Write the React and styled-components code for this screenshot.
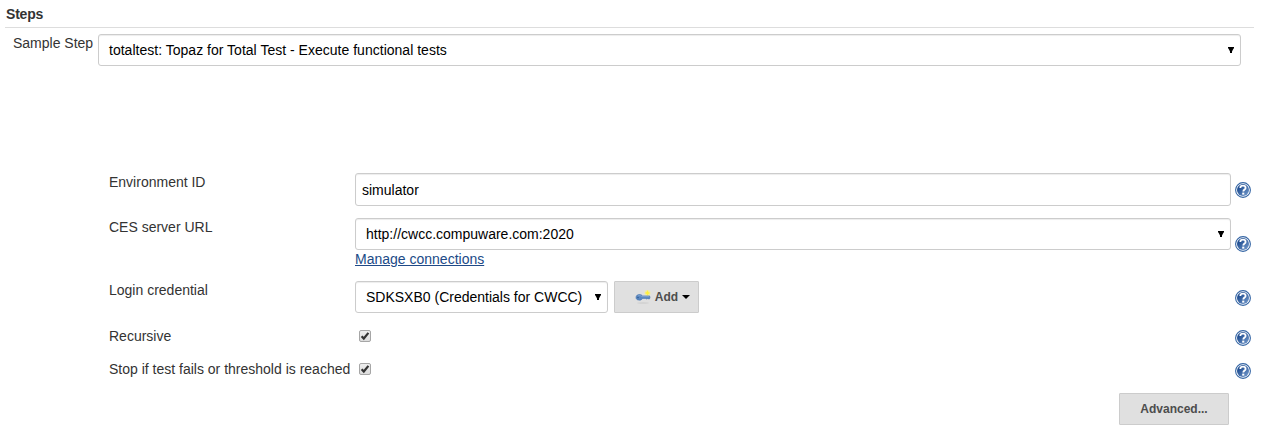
import React from "react";
import styled, { createGlobalStyle } from "styled-components";

const GlobalStyle = createGlobalStyle`
  *, *::before, *::after { box-sizing: border-box; }
  body {
    margin: 0;
    background: #fff;
    color: #333;
    font: 14px/20px "Liberation Sans", Arial, sans-serif;
  }
`;

const Page = styled.main`
  padding: 4px 7px 0 5px;
`;

const SectionTitle = styled.h1`
  margin: 0;
  height: 24px;
  padding-left: 1px;
  border-bottom: 1px solid #ddd;
  font-size: 14px;
  line-height: 20px;
  font-weight: bold;
  letter-spacing: -0.2px;
`;

const StepRow = styled.div`
  display: flex;
  padding: 6px 13px 0 8px;
`;

const StepLabel = styled.label`
  width: 85px;
  margin-top: -1px;
  white-space: nowrap;
`;

const Form = styled.div`
  padding: 107px 0 0 104px;
`;

const Row = styled.div`
  display: grid;
  grid-template-columns: 246px 876px 1fr;
  height: ${(p) => p.$height}px;
`;

const Label = styled.label`
  margin-top: ${(p) => p.$top ?? -1}px;
  white-space: nowrap;
`;

const Field = styled.div`
  min-width: 0;
`;

const Box = styled.div`
  display: flex;
  align-items: center;
  justify-content: space-between;
  flex: ${(p) => (p.$width ? "none" : 1)};
  width: ${(p) => (p.$width ? `${p.$width}px` : "auto")};
  height: ${(p) => p.$height ?? 32}px;
  padding: 0 6px 0 ${(p) => p.$left ?? 10}px;
  border: 1px solid #ccc;
  border-radius: 3px;
  box-shadow: inset 0 1px 1px rgba(0, 0, 0, 0.075);
  background: #fff;
  color: #000;
  white-space: nowrap;
  letter-spacing: ${(p) => p.$spacing ?? 0}px;
`;

const Arrow = styled.svg`
  display: block;
  width: 6px;
  height: 6px;
  flex: none;
`;

const Link = styled.a`
  display: block;
  width: max-content;
  margin-top: -1px;
  color: #204a87;
  text-decoration: underline;
`;

const Controls = styled.div`
  display: flex;
  gap: 6px;
`;

const Button = styled.button`
  display: flex;
  align-items: center;
  justify-content: center;
  width: ${(p) => p.$width}px;
  height: 32px;
  padding: ${(p) => p.$padding ?? "0"};
  border: 1px solid #ccc;
  border-radius: 1px;
  background: #e0e0e0;
  color: #4d4d4d;
  font: bold 12px/20px "Liberation Sans", Arial, sans-serif;
`;

const KeySvg = styled.svg`
  display: block;
  width: 16px;
  height: 16px;
  margin-right: 4px;
`;

const Caret = styled.span`
  margin-left: 4px;
  border: 4px solid transparent;
  border-top-color: #000;
  border-bottom: 0;
`;

const HelpSvg = styled.svg`
  display: block;
  width: 16px;
  height: 16px;
  margin: ${(p) => p.$top}px 0 0 4px;
`;

const CheckSvg = styled.svg`
  display: block;
  width: 12px;
  height: 12px;
  margin: 4px 0 0 4px;
`;

const Footer = styled.div`
  display: flex;
  justify-content: flex-end;
  padding-right: 25px;
`;

const DownArrow = () => (
  <Arrow viewBox="0 0 6 6">
    <path d="M0 0H6V1L5 2.5L4 4.5V6H2V4.5L1 2.5L0 1Z" fill="#000" />
  </Arrow>
);

const Select = ({ children, ...rest }) => (
  <Box {...rest}>
    <span>{children}</span>
    <DownArrow />
  </Box>
);

const Help = ({ top }) => (
  <HelpSvg $top={top} viewBox="0 0 16 16">
    <defs>
      <linearGradient id="help" x1="0" y1="0" x2="1" y2="1">
        <stop offset="0.25" stopColor="#214f93" />
        <stop offset="1" stopColor="#7ba0d0" />
      </linearGradient>
    </defs>
    <circle cx="8" cy="8" r="7.4" fill="#fff" stroke="#3465a4" strokeWidth="1.1" />
    <circle cx="8" cy="8" r="6" fill="url(#help)" />
    <path
      d="M5.3 6C5.3 4.4 6.4 3.7 8 3.7S10.6 4.5 10.6 5.9C10.6 7.5 8.3 7.6 8.3 9.6"
      fill="none"
      stroke="#fff"
      strokeWidth="1.8"
    />
    <rect x="7.2" y="10.6" width="2.1" height="2" fill="#fff" />
  </HelpSvg>
);

const Check = () => (
  <CheckSvg viewBox="0 0 12 12">
    <defs>
      <linearGradient id="check" x1="0" y1="0" x2="0" y2="1">
        <stop offset="0" stopColor="#eee" />
        <stop offset="1" stopColor="#dcdcdc" />
      </linearGradient>
    </defs>
    <rect x="0.5" y="0.5" width="11" height="11" rx="1.5" fill="url(#check)" stroke="#a6a6a6" />
    <path d="M2.6 6.2L4.8 8.5L9.4 2.9" fill="none" stroke="#333" strokeWidth="2.2" />
  </CheckSvg>
);

const Key = () => (
  <KeySvg viewBox="0 0 16 16">
    <ellipse cx="8" cy="14" rx="6" ry="0.8" fill="#cfcfcf" />
    <circle cx="12.5" cy="4" r="3" fill="#f0eaa8" />
    <path d="M12.5 1.3L13.4 3.1L15.2 4L13.4 4.9L12.5 6.7L11.6 4.9L9.8 4L11.6 3.1Z" fill="#fff23f" />
    <path
      d="M1 8.4C1 6.4 2.8 5.3 4.8 5.5C6.2 5.6 7 6.2 7.4 6.9H14.6L15 8.6L14.4 10H13.4L12.8 9.4L12 10.2L11 9.4H7.6C6.8 10.8 5.4 11.3 3.8 11.1C2 10.9 1 9.9 1 8.4Z"
      fill="#5b88c0"
      stroke="#4473b0"
      strokeWidth="0.6"
    />
    <path d="M3 6.9C4.2 6.3 5.6 6.5 6.8 7.6H14" fill="none" stroke="#8aacd5" strokeWidth="0.7" />
    <circle cx="3" cy="8.6" r="0.8" fill="#2f5b94" />
  </KeySvg>
);

export default function App() {
  return (
    <>
      <GlobalStyle />
      <Page>
        <SectionTitle>Steps</SectionTitle>
        <StepRow>
          <StepLabel>Sample Step</StepLabel>
          <Select $spacing={0.015}>totaltest: Topaz for Total Test - Execute functional tests</Select>
        </StepRow>
        <Form>
          <Row $height={45}>
            <Label>Environment ID</Label>
            <Field>
              <Box $height={33} $left={6}>simulator</Box>
            </Field>
            <Help top={9} />
          </Row>
          <Row $height={63}>
            <Label>CES server URL</Label>
            <Field>
              <Select>http://cwcc.compuware.com:2020</Select>
              <Link>Manage connections</Link>
            </Field>
            <Help top={18} />
          </Row>
          <Row $height={45}>
            <Label>Login credential</Label>
            <Controls>
              <Select $width={253}>SDKSXB0 (Credentials for CWCC)</Select>
              <Button $width={85} $padding="0 0 0 12px">
                <Key />
                Add
                <Caret />
              </Button>
            </Controls>
            <Help top={9} />
          </Row>
          <Row $height={33}>
            <Label $top={0}>Recursive</Label>
            <Field><Check /></Field>
            <Help top={4} />
          </Row>
          <Row $height={34}>
            <Label $top={0}>Stop if test fails or threshold is reached</Label>
            <Field><Check /></Field>
            <Help top={4} />
          </Row>
        </Form>
        <Footer>
          <Button $width={110}>Advanced...</Button>
        </Footer>
      </Page>
    </>
  );
}
